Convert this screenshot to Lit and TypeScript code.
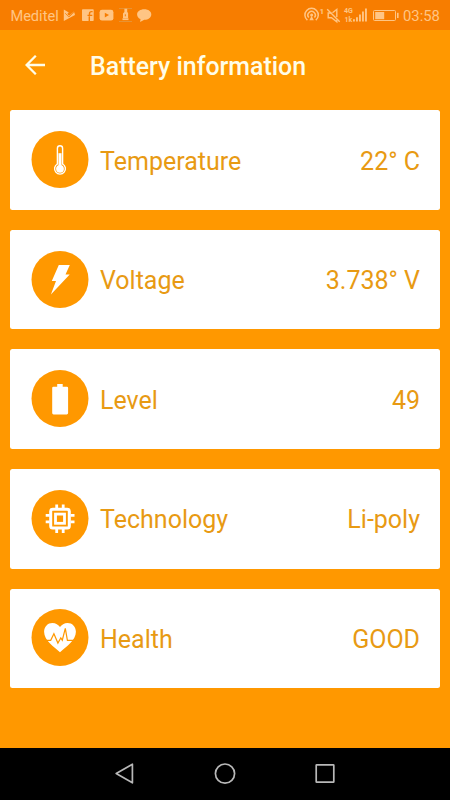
import { LitElement, html, css, svg } from "lit";
import { customElement, property } from "lit/decorators.js";

const icons: Record<string, unknown> = {
  temperature: svg`<path d="M25.9 33.4V17.4a2.6 2.6 0 0 1 5.2 0v16" fill="none" stroke="#fff" stroke-width="1.4"/>
    <path d="M25.9 33a5.4 5.4 0 1 0 5.2 0" fill="none" stroke="#fff" stroke-width="1.4"/>
    <path d="M28.5 22.2V36" stroke="#fff" stroke-width="3"/><circle cx="28.5" cy="37.8" r="3.9" fill="#fff"/>`,
  voltage: svg`<path d="M27.3 14h11l-4.3 9.6h4.2L19.4 43.4l5.1-13.5h-4.2z" fill="#fff"/>`,
  level: svg`<path d="M25.7 13.9h5.5v2.8h4.2q1.2 0 1.2 1.2v25.2q0 1.4-1.4 1.4H22.1q-1.4 0-1.4-1.4V17.9q0-1.2 1.2-1.2h3.8z" fill="#fff"/>`,
  technology: svg`<rect x="19.2" y="19.3" width="18.6" height="18.8" rx="2" fill="none" stroke="#fff" stroke-width="3"/>
    <rect x="24" y="24.1" width="9" height="9.2" fill="none" stroke="#fff" stroke-width="2.8"/>
    <rect x="27" y="27.2" width="3" height="3" fill="#ff9800"/>
    <path d="M25.2 14.4v4M31.7 14.4v4M25.2 39v4M31.7 39v4M14.2 25.4h4M14.2 31.9h4M39 25.4h4M39 31.9h4" stroke="#fff" stroke-width="2.8"/>`,
  health: svg`<path d="M28.5 43.2C22 37.6 12.6 31.4 12.6 22.8c0-5.5 3.8-8.9 8.3-8.9 3.3 0 6 1.6 7.6 4.2 1.6-2.6 4.3-4.2 7.6-4.2 4.5 0 8.3 3.4 8.3 8.9 0 8.6-9.4 14.8-15.9 20.4z" fill="#fff"/>
    <path d="M14 31.3h5.2l3.2-6.5 4 9.3 2.9-5.2 1.5 2.3 3-11.9 2.1 12h7.8" fill="none" stroke="#ff9800" stroke-width="1.2"/>`,
};

@customElement("info-card")
export class InfoCard extends LitElement {
  @property() icon = "";
  @property() label = "";
  @property() value = "";

  static styles = css`
    :host {
      display: flex;
      align-items: center;
      box-sizing: border-box;
      height: 99.7px;
      padding: 0 20px 0 21px;
      border-radius: 2.5px;
      background: #fff;
      color: #e89a13;
      font-size: 25px;
      line-height: 30px;
      white-space: pre;
    }
    .icon { width: 58px; height: 58px; margin-right: 11px; flex: none; }
    .label { flex: 1; padding-top: 3.4px; }
    .value { padding-top: 3.4px; }
  `;

  render() {
    return html`<svg class="icon" viewBox="-0.5 0 58 58"><circle cx="28.5" cy="28.5" r="28.5" fill="#ff9800"/>${icons[this.icon]}</svg>
      <span class="label">${this.label}</span><span class="value">${this.value}</span>`;
  }
}

@customElement("status-bar")
export class StatusBar extends LitElement {
  static styles = css`
    :host {
      display: flex;
      justify-content: space-between;
      height: 30px;
      background: #f77d00;
      color: #ffc584;
    }
    .group { display: flex; align-items: center; }
    .carrier { width: 51.6px; margin-left: 10.4px; font-size: 14.6px; line-height: 30px; padding-top: 2px; box-sizing: border-box; }
    .time { width: 47px; font-size: 14.8px; line-height: 30px; padding-top: 2px; box-sizing: border-box; }
    svg { height: 30px; flex: none; }
    .apps { width: 92px; }
    .signals { width: 101px; }
    .tiny { font: 700 7px Roboto, sans-serif; }
    .one { font: 700 8px Roboto, sans-serif; }
  `;

  render() {
    return html`
      <div class="group">
        <span class="carrier">Meditel</span>
        <svg class="apps" viewBox="62 0 92 30" fill="#ffc584">
          <path d="M63.8 9.6l5 3-1.6 1.4 1.9 1.8 4.9-4.3 1 3.4-11.2 6z"/>
          <path d="M65.2 13.2l3.7 3.8 5.8-5.5" fill="none" stroke="#f77d00" stroke-width=".8"/>
          <rect x="82" y="9.3" width="11.7" height="11.7" rx=".8"/>
          <path d="M89.3 21v-4.8M87.5 15.4h4.8M89.5 16v-2.3q0-2.1 2.1-2.1h1" fill="none" stroke="#f77d00" stroke-width="1.4"/>
          <rect x="99.6" y="9.8" width="13.8" height="10.8" rx="2.4"/>
          <path d="M104.8 12.7v4.8l4.2-2.4z" fill="#f77d00"/>
          <path d="M119 8.5h13M119 21.5h13" stroke="#e39840" stroke-width=".8"/>
          <path d="M124.4 8.8h2.8v3.1l.9 1v5.1h-5.1v-4.4l1.4-1.6z"/><path d="M122.5 19.2h6" stroke="#ffc584" stroke-width="1.8"/>
          <path d="M125.3 14.3v2" stroke="#f77d00" stroke-width="1"/>
          <path d="M144.3 9.2c4 0 7 2.2 7 5.2s-3 5.4-7 5.4l-4.2 2.1.4-2.8c-2-.9-3.4-2.6-3.4-4.7 0-3 3.2-5.2 7.2-5.2z"/>
        </svg>
      </div>
      <div class="group">
        <svg class="signals" viewBox="302 0 101 30" fill="#ffc584">
          <g fill="none" stroke="#ffc584" stroke-width="1.5">
            <path d="M307.4 20.2a6.7 6.7 0 1 1 8.4 0"/><path d="M308.8 17.6a3.7 3.7 0 1 1 5.6 0"/>
            <path d="M336.8 17V9.5l-4.3 3.2M331.5 13h-3.3v4.8h3.3l5.3 4v-2" stroke-width="1.4"/>
            <path d="M327.2 9.2l12.5 12.6" stroke-width="1.4"/>
          </g>
          <circle cx="311.6" cy="15.1" r="1.5"/>
          <path d="M311.6 15.8l2.2 4.4h-4.4z"/>
          <text class="one" x="319.6" y="13.8">1</text>
          <text class="tiny" x="344" y="13.4">4G</text>
          <text class="tiny" x="344.4" y="21.6">1k</text>
          <path d="M353 19.3h1.9v2.3H353zM356 17.2h1.9v4.4H356zM359 14.4h1.9v7.2H359zM362 11.5h1.9v10.1H362zM365 8.4h1.9v13.2H365z"/>
          <rect x="373.5" y="10.5" width="22" height="10" rx="1" fill="none" stroke="#ffc584" stroke-width="1"/>
          <rect x="375.2" y="12" width="9" height="7.2"/><rect x="397" y="12.8" width="1.6" height="5.2"/>
        </svg>
        <span class="time">03:58</span>
      </div>`;
  }
}

@customElement("app-root")
export class AppRoot extends LitElement {
  static styles = css`
    :host {
      display: flex;
      flex-direction: column;
      width: 450px;
      height: 800px;
      overflow: hidden;
      background: #ff9800;
      font-family: Roboto, sans-serif;
    }
    .bar { display: flex; align-items: center; height: 70px; padding-left: 25px; }
    .back { width: 20px; height: 20px; margin-right: 45px; }
    .title { color: #fffde8; font-size: 24.9px; font-weight: 500; line-height: 30px; padding-top: 4px; }
    .cards { flex: 1; display: flex; flex-direction: column; gap: 19.9px; padding: 10.2px 10px 0; }
    .nav { display: flex; justify-content: center; align-items: center; gap: 78px; height: 52px; background: #000; }
    .nav svg { width: 22px; height: 22px; fill: none; stroke: #b8b8b8; stroke-width: 1.7; }
  `;

  private rows = [
    { icon: "temperature", label: "Temperature", value: "22° C" },
    { icon: "voltage", label: "Voltage", value: "3.738° V" },
    { icon: "level", label: "Level", value: "49" },
    { icon: "technology", label: "Technology", value: "Li-poly" },
    { icon: "health", label: "Health", value: "GOOD" },
  ];

  render() {
    return html`
      <status-bar></status-bar>
      <header class="bar">
        <svg class="back" viewBox="0 0 20 20" fill="none" stroke="#fffde8" stroke-width="2.3"><path d="M20 10H2M10.8 .8L1.6 10l9.2 9.2"/></svg>
        <span class="title">Battery information</span>
      </header>
      <main class="cards">
        ${this.rows.map((r) => html`<info-card .icon=${r.icon} .label=${r.label} .value=${r.value}></info-card>`)}
      </main>
      <nav class="nav">
        <svg viewBox="0 0 22 22"><path d="M18.4 1.2v18.6L2.2 10.5z" stroke-linejoin="round"/></svg>
        <svg viewBox="0 0 22 22"><circle cx="11" cy="10.6" r="9.6"/></svg>
        <svg viewBox="0 0 22 22"><rect x="2.2" y="1.8" width="17.6" height="17.4" rx=".5"/></svg>
      </nav>`;
  }
}
